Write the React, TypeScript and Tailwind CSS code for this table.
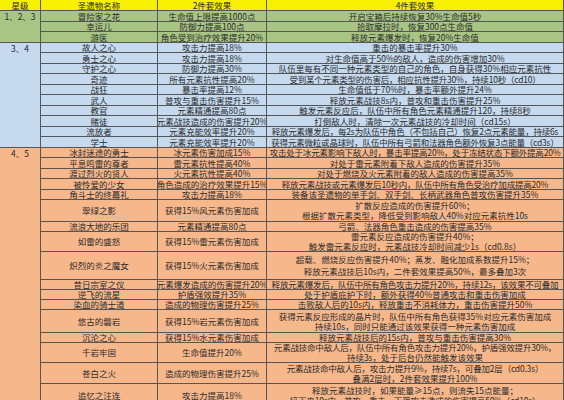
type Row = { name: string; two: string; four: string[] };

const rows: Row[] = [
  { name: '冒险家之花', two: '生命值上限提高1000点', four: ['开启宝箱后持续恢复30%生命值5秒'] },
  { name: '幸运儿', two: '防御力提高100点', four: ['拾取摩拉时，恢复300点生命值'] },
  { name: '游医', two: '角色受到治疗效果提升20%', four: ['释放元素爆发时，恢复20%生命值'] },
  { name: '故人之心', two: '攻击力提高18%', four: ['重击的暴击率提升30%'] },
  { name: '勇士之心', two: '攻击力提高18%', four: ['对生命值高于50%的敌人，造成的伤害增加30%'] },
  { name: '守护之心', two: '防御力提高30%', four: ['队伍里每有不同一种元素类型的自己的角色，自身获得30%相应元素抗性'] },
  { name: '奇迹', two: '所有元素抗性提高20%', four: ['受到某个元素类型的伤害后，相应抗性提升30%，持续10秒（cd10）'] },
  { name: '战狂', two: '暴击率提高12%', four: ['生命值低于70%时，暴击率额外提升24%'] },
  { name: '武人', two: '普攻与重击伤害提升15%', four: ['释放元素战技8s内，普攻和重击伤害提升25%'] },
  { name: '教官', two: '元素精通提高80点', four: ['触发元素反应后，队伍中所有角色元素精通提升120，持续8秒'] },
  { name: '赌徒', two: '元素战技造成的伤害提升20%', four: ['打倒敌人时，清除一次元素战技的冷却时间（cd15s）'] },
  { name: '流放者', two: '元素充能效率提升20%', four: ['释放元素爆发后，每2s为队伍中角色（不包括自己）恢复2点元素能量，持续6s'] },
  { name: '学士', two: '元素充能效率提升20%', four: ['获得元素微粒或晶球时，队伍中所有弓箭和法器角色额外恢复3点能量（cd3s）'] },
  { name: '冰封迷途的勇士', two: '冰元素伤害加成15%', four: ['攻击处于冰元素影响下敌人时，暴击率提高20%，处于冻结状态下额外提高20%'] },
  { name: '平息鸣雷的尊者', two: '雷元素抗性提高40%', four: ['对处于雷元素附着下敌人造成的伤害提升35%'] },
  { name: '渡过烈火的贤人', two: '火元素抗性提高40%', four: ['对处于燃烧及火元素附着的敌人造成的伤害提高35%'] },
  { name: '被怜爱的少女', two: '角色造成的治疗效果提升15%', four: ['释放元素战技或元素爆发后10秒内，队伍中所有角色受治疗加成提高20%'] },
  { name: '角斗士的终幕礼', two: '攻击力提高18%', four: ['装备该圣遗物的单手剑、双手剑、长柄武器角色普攻伤害提升35%'] },
  { name: '翠绿之影', two: '获得15%风元素伤害加成', four: ['扩散反应造成的伤害提升60%；', '根据扩散元素类型，降低受到影响敌人40%对应元素抗性10s'] },
  { name: '流浪大地的乐团', two: '元素精通提高80点', four: ['弓箭、法器角色重击造成的伤害提高35%'] },
  { name: '如雷的盛怒', two: '获得15%雷元素伤害加成', four: ['雷元素反应造成的伤害提升40%；', '触发雷元素反应时，元素战技冷却时间减少1s（cd0.8s）'] },
  { name: '炽烈的炎之魔女', two: '获得15%火元素伤害加成', four: ['超载、燃烧反应伤害提升40%；蒸发、融化加成系数提升15%；', '释放元素战技后10s内，二件套效果提高50%，最多叠加3次'] },
  { name: '昔日宗室之仪', two: '元素爆发造成的伤害提升20%', four: ['释放元素爆发后，队伍中所有角色攻击力提升20%，持续12s，该效果不可叠加'] },
  { name: '逆飞的流星', two: '护盾强效提升35%', four: ['处于护盾庇护下时，额外获得40%普通攻击和重击伤害加成'] },
  { name: '染血的骑士道', two: '造成的物理伤害提升25%', four: ['击败敌人后的10s内，释放重击不消耗体力，重击伤害提升50%'] },
  { name: '悠古的磐岩', two: '获得15%岩元素伤害加成', four: ['获得元素反应形成的晶片时，队伍中所有角色获得35%对应元素伤害加成', '持续10s，同时只能通过该效果获得一种元素伤害加成'] },
  { name: '沉沦之心', two: '获得15%水元素伤害加成', four: ['释放元素战技后的15s内，普攻与重击伤害提高30%'] },
  { name: '千岩牢固', two: '生命值提升20%', four: ['元素战技命中敌人后，队伍中所有角色攻击力提升20%，护盾强效提升30%，', '持续3s，处于后台仍然能触发该效果'] },
  { name: '苍白之火', two: '造成的物理伤害提升25%', four: ['元素战技命中敌人后，攻击力提升9%，持续7s，可叠加2层（cd0.3s）', '叠满2层时，2件套效果提升100%'] },
  { name: '追忆之注连', two: '攻击力提高18%', four: ['释放元素战技时，如果能量≥15点，则流失15点能量；', '接下来10s内，普攻、重击、下落攻击造成的伤害提高50%（cd10s）'] },
];

const groupBg = (i: number) => (i < 3 ? 'bg-[#a8c584]' : i < 13 ? 'bg-[#c5d9ef]' : 'bg-[#f6b78b]');

const cell = 'flex flex-col items-center justify-center overflow-hidden whitespace-nowrap border-b border-r border-[#565656]';

export default function App() {
  return (
    <div className="h-[400px] w-[564px] overflow-hidden bg-white font-['Noto_Sans_CJK_SC',sans-serif] text-[8.5px] text-[#2b2b2b]">
      <div className="grid grid-cols-[41px_117px_109px_297px] grid-rows-[11px_11px_10px_11px_10px_11px_10px_11px_10px_11px_10px_11px_10px_11px_10px_11px_10px_11px_10px_22px_10px_20px_28px_10px_10px_10px_23px_10px_20px_21px_24px] leading-[9px]">
        <div className={`${cell} bg-[#f7f000]`}>星级</div>
        <div className={`${cell} bg-[#f7f000]`}>圣遗物名称</div>
        <div className={`${cell} bg-[#f7f000]`}>2件套效果</div>
        <div className={`${cell} bg-[#f7f000]`}>4件套效果</div>

        {rows.map((r, i) => (
          <div key={r.name} className="contents">
            {i === 0 && (
              <div className="row-span-3 flex justify-center border-b border-r border-[#565656] bg-[#a8c584] pt-[1px]">1、2、3</div>
            )}
            {i === 3 && (
              <div className="row-span-10 flex justify-center border-b border-r border-[#565656] bg-[#c5d9ef] pt-[1px]">3、4</div>
            )}
            {i === 13 && (
              <div className="row-span-[17] flex justify-center border-b border-r border-[#565656] bg-[#f6b78b] pt-[1px]">4、5</div>
            )}
            <div className={`${cell} col-start-2 ${groupBg(i)}`}>{r.name}</div>
            <div className={`${cell} ${groupBg(i)}`}>{r.two}</div>
            <div className={`${cell} ${groupBg(i)} ${i === 21 ? 'gap-[3px]' : 'gap-[1px]'}`}>
              {r.four.map((t) => (
                <span key={t} className={t.length > 33 ? 'tracking-[-0.2px]' : ''}>
                  {t}
                </span>
              ))}
            </div>
          </div>
        ))}
      </div>
    </div>
  );
}
